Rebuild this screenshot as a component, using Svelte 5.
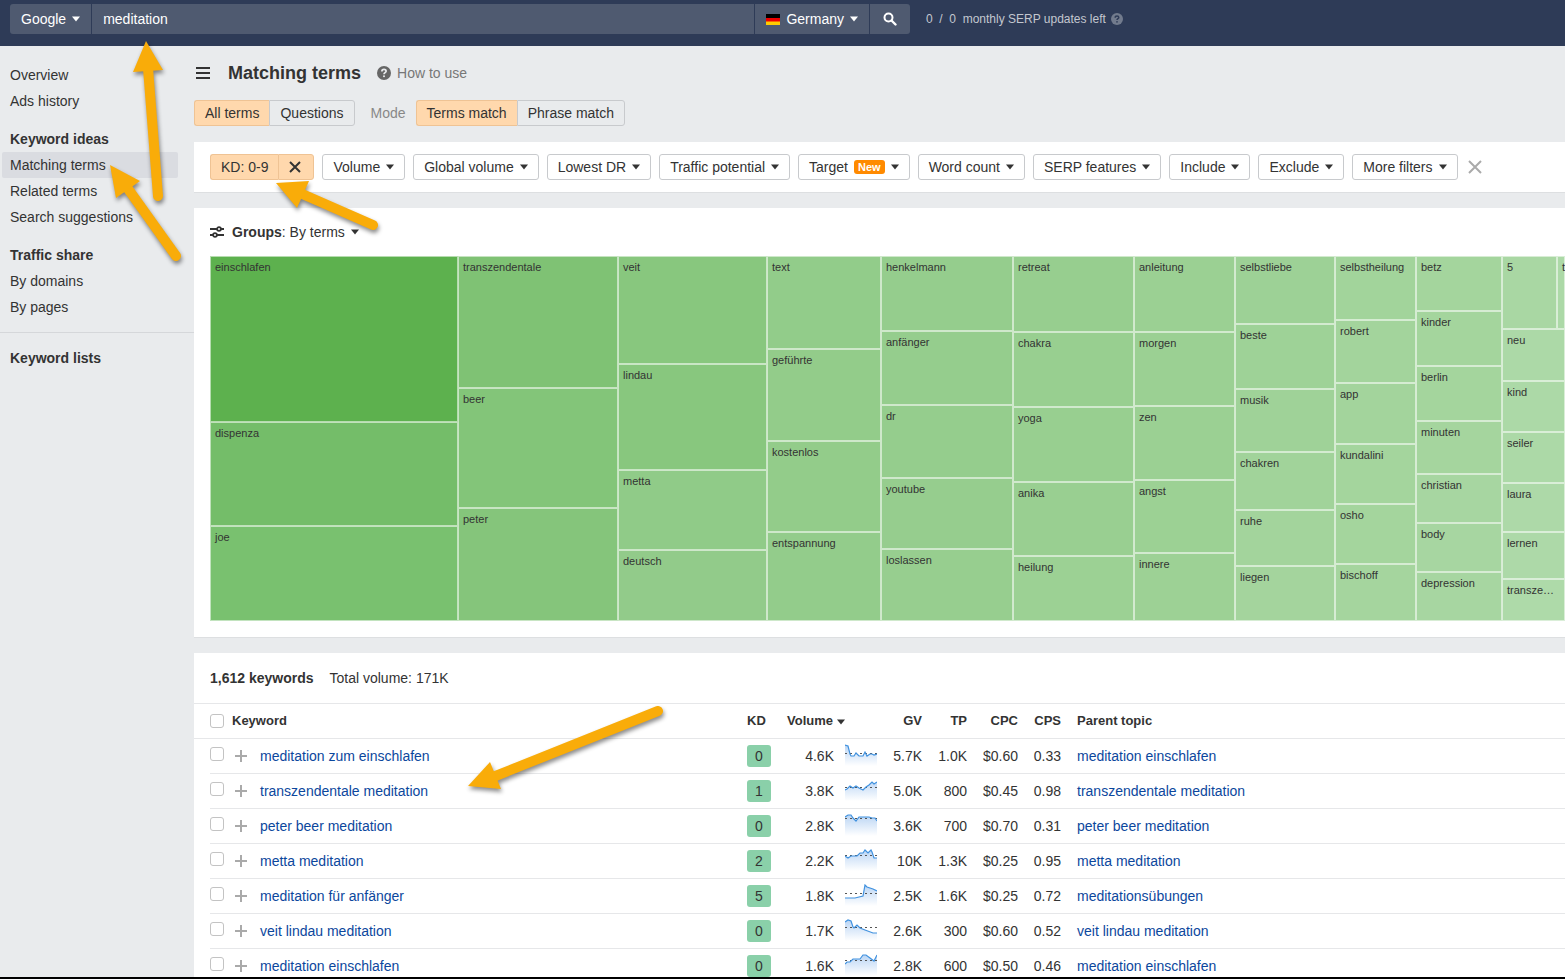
<script>
  let query = 'meditation'

  const nav = [
    { items: ['Overview', 'Ads history'] },
    {
      title: 'Keyword ideas',
      items: ['Matching terms', 'Related terms', 'Search suggestions']
    },
    { title: 'Traffic share', items: ['By domains', 'By pages'] }
  ]
  const current = 'Matching terms'

  const filters = [
    'Volume',
    'Global volume',
    'Lowest DR',
    'Traffic potential',
    'Target',
    'Word count',
    'SERP features',
    'Include',
    'Exclude',
    'More filters'
  ]

  // treemap columns: share of the width, then [term, share of the height, colour]
  const columns = [
    {
      size: 248,
      cells: [
        ['einschlafen', 166, '#5db14e'],
        ['dispenza', 104, '#74bd69'],
        ['joe', 95, '#79c16f']
      ]
    },
    {
      size: 160,
      cells: [
        ['transzendentale', 132, '#7fc274'],
        ['beer', 120, '#83c579'],
        ['peter', 113, '#85c57b']
      ]
    },
    {
      size: 149,
      cells: [
        ['veit', 108, '#88c77e'],
        ['lindau', 106, '#88c77e'],
        ['metta', 80, '#90cb88'],
        ['deutsch', 71, '#92cb8a']
      ]
    },
    {
      size: 114,
      cells: [
        ['text', 93, '#92cc8a'],
        ['geführte', 92, '#93cc8a'],
        ['kostenlos', 91, '#93cc8a'],
        ['entspannung', 89, '#93cc8b']
      ]
    },
    {
      size: 132,
      cells: [
        ['henkelmann', 75, '#95cd8d'],
        ['anfänger', 74, '#95cd8d'],
        ['dr', 73, '#95cd8d'],
        ['youtube', 71, '#96cd8e'],
        ['loslassen', 72, '#97ce8f']
      ]
    },
    {
      size: 121,
      cells: [
        ['retreat', 76, '#97ce8f'],
        ['chakra', 75, '#98cf90'],
        ['yoga', 75, '#98cf90'],
        ['anika', 74, '#99cf91'],
        ['heilung', 65, '#9cd194']
      ]
    },
    {
      size: 101,
      cells: [
        ['anleitung', 76, '#9bd093'],
        ['morgen', 74, '#9bd093'],
        ['zen', 74, '#9bd093'],
        ['angst', 73, '#9cd194'],
        ['innere', 68, '#9dd195']
      ]
    },
    {
      size: 100,
      cells: [
        ['selbstliebe', 68, '#9dd196'],
        ['beste', 65, '#9ed297'],
        ['musik', 63, '#9fd298'],
        ['chakren', 58, '#a1d39a'],
        ['ruhe', 56, '#a3d49c'],
        ['liegen', 55, '#a4d49d']
      ]
    },
    {
      size: 81,
      cells: [
        ['selbstheilung', 64, '#a2d49b'],
        ['robert', 63, '#a3d49c'],
        ['app', 61, '#a3d49c'],
        ['kundalini', 60, '#a4d59d'],
        ['osho', 60, '#a4d59d'],
        ['bischoff', 57, '#a5d59e']
      ]
    },
    {
      size: 86,
      cells: [
        ['betz', 55, '#a4d59d'],
        ['kinder', 55, '#a4d59d'],
        ['berlin', 55, '#a4d59d'],
        ['minuten', 53, '#a5d59e'],
        ['christian', 49, '#a7d6a1'],
        ['body', 49, '#a7d6a1'],
        ['depression', 49, '#a7d6a1']
      ]
    }
  ]
  const lastColumn = [
    ['neu', 52, '#acd9a7'],
    ['kind', 51, '#acd9a7'],
    ['seiler', 51, '#acd9a7'],
    ['laura', 49, '#add9a8'],
    ['lernen', 47, '#add9a8'],
    ['transze…', 42, '#aedaa9']
  ]

  const rows = [
    {
      keyword: 'meditation zum einschlafen',
      kd: 0, volume: '4.6K', gv: '5.7K', tp: '1.0K', cpc: '$0.60', cps: '0.33',
      parent: 'meditation einschlafen',
      trend: '0,1 3,2 5,10 6,12 9,12 11,9 14,12 18,12 20,8 22,12 25,10 27,10 29,11 32,10',
      average: 9
    },
    {
      keyword: 'transzendentale meditation',
      kd: 1, volume: '3.8K', gv: '5.0K', tp: '800', cpc: '$0.45', cps: '0.98',
      parent: 'transzendentale meditation',
      trend: '0,11 2,10 5,7 8,9 11,7 14,9 18,11 21,8 24,6 27,3 29,5 32,3',
      average: 8
    },
    {
      keyword: 'peter beer meditation',
      kd: 0, volume: '2.8K', gv: '3.6K', tp: '700', cpc: '$0.70', cps: '0.31',
      parent: 'peter beer meditation',
      trend: '0,3 3,1 6,1 8,4 11,7 14,3 17,3 24,3 27,4 30,4 32,7',
      average: 4
    },
    {
      keyword: 'metta meditation',
      kd: 2, volume: '2.2K', gv: '10K', tp: '1.3K', cpc: '$0.25', cps: '0.95',
      parent: 'metta meditation',
      trend: '0,7 3,9 6,7 12,7 15,4 18,4 20,1 23,4 26,1 27,3 29,9 32,9',
      average: 6
    },
    {
      keyword: 'meditation für anfänger',
      kd: 5, volume: '1.8K', gv: '2.5K', tp: '1.6K', cpc: '$0.25', cps: '0.72',
      parent: 'meditationsübungen',
      trend: '0,14 10,14 14,13 18,12 20,1 22,3 28,5 32,7',
      average: 9
    },
    {
      keyword: 'veit lindau meditation',
      kd: 0, volume: '1.7K', gv: '2.6K', tp: '300', cpc: '$0.60', cps: '0.52',
      parent: 'veit lindau meditation',
      trend: '0,3 3,1 6,2 8,8 9,9 12,6 15,9 20,11 28,14 32,14',
      average: 8
    },
    {
      keyword: 'meditation einschlafen',
      kd: 0, volume: '1.6K', gv: '2.8K', tp: '600', cpc: '$0.50', cps: '0.46',
      parent: 'meditation einschlafen',
      trend: '0,10 2,8 5,8 8,5 15,5 18,1 21,1 25,4 29,7 32,1',
      average: 6
    }
  ]
</script>

{#snippet caret()}
  <svg class="caret" width="8" height="6" viewBox="0 0 8 6" aria-hidden="true">
    <path d="M0 .5h8L4 5.5z" />
  </svg>
{/snippet}

{#snippet help(size)}
  <svg class="help" width={size} height={size} viewBox="0 0 14 14" aria-hidden="true">
    <circle cx="7" cy="7" r="7" fill="currentColor" />
    <path class="mark" d="M4.9 5.4C4.9 4.1 5.8 3.4 7 3.4s2.1.7 2.1 1.8c0 1.4-2.1 1.5-2.1 3" />
    <circle class="dot" cx="7" cy="10.3" r="1" />
  </svg>
{/snippet}

{#snippet cell([term, size, color])}
  <div class="cell" style="flex-grow: {size}; background-color: {color}">
    <span>{term}</span>
  </div>
{/snippet}

<div class="app">
  <header class="topbar">
    <form class="search">
      <button type="button" class="engine">Google {@render caret()}</button>
      <input type="text" aria-label="Keyword" bind:value={query} />
      <button type="button" class="country">
        <svg width="14" height="11" viewBox="0 0 14 11" aria-hidden="true">
          <path fill="#000" d="M0 0h14v4H0z" />
          <path fill="#e00" d="M0 4h14v4H0z" />
          <path fill="#fc0" d="M0 7.5h14V11H0z" />
        </svg>
        Germany {@render caret()}
      </button>
      <button type="button" class="submit" aria-label="Search">
        <svg width="14" height="14" viewBox="0 0 14 14" aria-hidden="true">
          <circle cx="5.5" cy="5.5" r="4" fill="none" stroke="#fff" stroke-width="2" />
          <path d="M8.5 8.5l4 4" stroke="#fff" stroke-width="2.4" stroke-linecap="round" />
        </svg>
      </button>
    </form>
    <div class="updates">
      <span>0 &nbsp;/&nbsp; 0 &nbsp;monthly SERP updates left</span>
      {@render help(12)}
    </div>
  </header>

  <div class="body">
    <nav class="sidebar">
      {#each nav as group}
        <section>
          {#if group.title}<h2>{group.title}</h2>{/if}
          {#each group.items as item}
            <a href="#top" class:active={item === current}>{item}</a>
          {/each}
        </section>
      {/each}
      <section class="lists">
        <h2>Keyword lists</h2>
      </section>
    </nav>

    <main>
      <div class="title">
        <button class="burger" aria-label="Menu">
          <svg width="14" height="12" viewBox="0 0 14 12" aria-hidden="true">
            <path d="M0 0h14v2H0zM0 5h14v2H0zM0 10h14v2H0z" fill="#333" />
          </svg>
        </button>
        <h1>Matching terms</h1>
        <a href="#how">{@render help(14)} How to use</a>
      </div>

      <div class="modes">
        <div class="switch">
          <button class="on">All terms</button>
          <button>Questions</button>
        </div>
        <div class="mode">
          <span>Mode</span>
          <div class="switch">
            <button class="on">Terms match</button>
            <button>Phrase match</button>
          </div>
        </div>
      </div>

      <div class="card filters">
        <div class="switch">
          <button class="on">KD: 0-9</button>
          <button class="on clear" aria-label="Remove KD filter">
            <svg width="12" height="12" viewBox="0 0 12 12" aria-hidden="true">
              <path d="M1 1l10 10M11 1L1 11" stroke="#333" stroke-width="2" />
            </svg>
          </button>
        </div>
        {#each filters as filter}
          <button class="filter">
            {filter}
            {#if filter === 'Target'}<em>New</em>{/if}
            {@render caret()}
          </button>
        {/each}
        <button class="reset" aria-label="Reset filters">
          <svg width="14" height="14" viewBox="0 0 14 14" aria-hidden="true">
            <path d="M1 1l12 12M13 1L1 13" stroke="#aaa" stroke-width="2" />
          </svg>
        </button>
      </div>

      <div class="card groups">
        <button class="group-by">
          <svg width="14" height="12" viewBox="0 0 14 12" aria-hidden="true">
            <g fill="none" stroke="#333" stroke-width="1.8">
              <path d="M0 3h7M11 3h3M0 9h3M7 9h7" />
              <circle cx="9" cy="3" r="1.9" />
              <circle cx="5" cy="9" r="1.9" />
            </g>
          </svg>
          <span><b>Groups</b>: By terms</span>
          {@render caret()}
        </button>

        <div class="treemap">
          {#each columns as column}
            <div class="column" style="flex-grow: {column.size}">
              {#each column.cells as item}{@render cell(item)}{/each}
            </div>
          {/each}
          <div class="column" style="flex-grow: 63">
            <div class="pair" style="flex-grow: 73">
              {@render cell(['5', 55, '#a9d7a3'])}
              {@render cell(['t', 8, '#acd9a7'])}
            </div>
            {#each lastColumn as item}{@render cell(item)}{/each}
          </div>
        </div>
      </div>

      <div class="card keywords">
        <div class="summary">
          <b>1,612 keywords</b>
          <span>Total volume: 171K</span>
        </div>
        <table>
          <colgroup>
            <col class="c-gutter" />
            <col class="c-check" />
            <col class="c-plus" />
            <col class="c-keyword" />
            <col class="c-kd" />
            <col class="c-volume" />
            <col class="c-trend" />
            <col class="c-number" />
            <col class="c-number" />
            <col class="c-cpc" />
            <col class="c-cps" />
            <col />
          </colgroup>
          <thead>
            <tr>
              <td></td>
              <th><input type="checkbox" aria-label="Select all" /></th>
              <th colspan="2">Keyword</th>
              <th>KD</th>
              <th colspan="2">Volume {@render caret()}</th>
              <th class="num">GV</th>
              <th class="num">TP</th>
              <th class="num">CPC</th>
              <th class="num">CPS</th>
              <th class="parent">Parent topic</th>
            </tr>
          </thead>
          <tbody>
            {#each rows as row}
              <tr>
                <td></td>
                <td class="check">
                  <input type="checkbox" aria-label={row.keyword} />
                </td>
                <td>
                  <button class="plus" aria-label="Add to list">
                    <svg width="12" height="12" viewBox="0 0 12 12" aria-hidden="true">
                      <path d="M5 0h2v5h5v2H7v5H5V7H0V5h5z" fill="#aaa" />
                    </svg>
                  </button>
                </td>
                <td><a href="#keyword">{row.keyword}</a></td>
                <td><span class="kd">{row.kd}</span></td>
                <td class="num volume">{row.volume}</td>
                <td>
                  <svg class="trend" width="32" height="24" viewBox="0 0 32 24" aria-hidden="true">
                    <defs>
                      <linearGradient id="fade" x1="0" y1="0" x2="0" y2="22" gradientUnits="userSpaceOnUse">
                        <stop offset="0" stop-color="#4a90e2" stop-opacity=".4" />
                        <stop offset="1" stop-color="#4a90e2" stop-opacity="0" />
                      </linearGradient>
                    </defs>
                    <polygon points="{row.trend} 32,22 0,22" fill="url(#fade)" />
                    <path d="M0 {row.average}.5h32" stroke="#555" stroke-dasharray="2 3" />
                    <polyline points={row.trend} fill="none" stroke="#4192df" stroke-width="1.2" />
                  </svg>
                </td>
                <td class="num">{row.gv}</td>
                <td class="num">{row.tp}</td>
                <td class="num">{row.cpc}</td>
                <td class="num">{row.cps}</td>
                <td class="parent"><a href="#parent">{row.parent}</a></td>
              </tr>
            {/each}
          </tbody>
        </table>
      </div>
    </main>
  </div>

  <!-- pointers laid over the page -->
  <svg class="arrows" width="700" height="820" viewBox="0 0 700 820" aria-hidden="true">
    <g>
      <path d="M148 68L158 196" />
      <polygon points="146,41 133,72 163,70" />
    </g>
    <g>
      <path d="M126 186L176 256" />
      <polygon points="110,165 140,181 116,198" />
    </g>
    <g>
      <path d="M300 193L373 225" />
      <polygon points="276,183 309,181 297,208" />
    </g>
    <g>
      <path d="M493 777L658 711" />
      <polygon points="468,786 490,762 501,789" />
    </g>
  </svg>
</div>

<style>
  :global(body) {
    background: #e9ebed;
  }

  .app {
    position: relative;
    box-sizing: border-box;
    height: 100vh;
    overflow: hidden;
    border-bottom: 2px solid #000;
    display: flex;
    flex-direction: column;
    color: #333;
    font: 14px/26px Arial, 'Liberation Sans', sans-serif;
  }

  button,
  input {
    font: inherit;
    color: inherit;
    margin: 0;
    padding: 0;
    border: 0;
    background: none;
    border-radius: 0;
  }

  button {
    cursor: pointer;
    white-space: nowrap;
  }

  a {
    color: inherit;
    text-decoration: none;
  }

  h1,
  h2 {
    margin: 0;
    font-size: inherit;
  }

  svg {
    display: block;
    flex: none;
  }

  .caret {
    fill: currentColor;
  }

  .topbar {
    flex: none;
    box-sizing: border-box;
    height: 46px;
    padding: 4px 10px 0;
    background: #2e3b57;
    color: #fff;
    display: flex;
    align-items: flex-start;
    gap: 16px;
  }

  .search {
    flex: 0 1 900px;
    height: 30px;
    display: flex;
    gap: 1px;
    border-radius: 3px;
    overflow: hidden;
  }

  .search button,
  .search input {
    background: #4f5a70;
  }

  .search button {
    display: flex;
    align-items: center;
    justify-content: center;
    gap: 6px;
    padding: 0 11px;
  }

  .search input {
    flex: 1;
    min-width: 0;
    padding: 0 11px;
  }

  .search .submit {
    width: 40px;
  }

  .updates {
    display: flex;
    align-items: center;
    gap: 5px;
    height: 30px;
    font-size: 12px;
    color: #c3c7cf;
    white-space: nowrap;
  }

  .updates .help {
    color: #727b8d;
  }

  .help .mark {
    fill: none;
    stroke: #e9ebed;
    stroke-width: 1.7;
  }

  .help .dot {
    fill: #e9ebed;
  }

  .updates .help .mark {
    stroke: #2e3b57;
  }

  .updates .help .dot {
    fill: #2e3b57;
  }

  .body {
    flex: 1;
    min-height: 0;
    display: flex;
  }

  .sidebar {
    flex: none;
    width: 194px;
    padding-top: 16px;
  }

  .sidebar section {
    margin-bottom: 12px;
    padding: 0 16px 0 2px;
  }

  .sidebar a,
  .sidebar h2 {
    display: block;
    padding-left: 8px;
  }

  .sidebar .active {
    background: #dadce1;
    border-radius: 2px;
  }

  .sidebar .lists {
    border-top: 1px solid #d5d7da;
    padding-top: 12px;
  }

  main {
    flex: 1;
    min-width: 0;
  }

  .title {
    display: flex;
    align-items: center;
    height: 54px;
  }

  .burger {
    padding: 0 2px;
    margin-right: 16px;
  }

  h1 {
    font-size: 18px;
    margin-right: 16px;
  }

  .title a {
    display: flex;
    align-items: center;
    gap: 6px;
    color: #777;
  }

  .title .help {
    color: #666;
  }

  .modes {
    display: flex;
    gap: 16px;
    margin-bottom: 16px;
  }

  .mode {
    display: flex;
    gap: 10px;
    color: #888;
  }

  .switch {
    display: flex;
    color: #333;
  }

  .switch button,
  .filter {
    box-sizing: border-box;
    height: 26px;
    line-height: 24px;
    border: 1px solid #c8cacd;
    padding: 0 10px;
  }

  .switch button:first-child {
    border-right: 0;
    border-radius: 3px 0 0 3px;
  }

  .switch button:last-child {
    border-radius: 0 3px 3px 0;
  }

  .switch .on {
    background: #ffd8ad;
    border-color: #efc394;
  }

  .card {
    background: #fff;
    margin-bottom: 15px;
    border-bottom: 1px solid #dddfe1;
  }

  .filters {
    display: flex;
    align-items: center;
    gap: 8px;
    padding: 12px 0 12px 16px;
  }

  .filter {
    display: flex;
    align-items: center;
    gap: 6px;
    border-radius: 3px;
    background: #fff;
  }

  .filter em {
    background: #ff8a00;
    color: #fff;
    font: bold 11px/14px Arial, 'Liberation Sans', sans-serif;
    padding: 0 4px;
    border-radius: 3px;
  }

  .clear {
    width: 36px;
  }

  .reset {
    padding: 0 2px;
  }

  .groups {
    padding: 0 0 16px 16px;
  }

  .group-by {
    height: 48px;
    display: flex;
    align-items: center;
    gap: 8px;
  }

  .group-by .caret {
    margin-left: -2px;
  }

  .treemap {
    display: flex;
    height: 365px;
    font-size: 11px;
    line-height: 12px;
  }

  .column {
    flex: 1 1 0;
    min-width: 0;
    display: flex;
    flex-direction: column;
  }

  .pair {
    flex: 1 1 0;
    min-height: 0;
    display: flex;
  }

  .cell {
    flex: 1 1 0;
    min-width: 0;
    min-height: 0;
    box-shadow: inset 0 0 0 1px rgba(255, 255, 255, 0.55);
    overflow: hidden;
    white-space: nowrap;
  }

  .cell span {
    display: block;
    padding: 5px 0 0 5px;
  }

  .summary {
    height: 50px;
    padding-left: 16px;
    display: flex;
    align-items: center;
    gap: 16px;
  }

  table {
    width: 100%;
    table-layout: fixed;
    border-collapse: separate;
    border-spacing: 0;
  }

  .c-gutter {
    width: 16px;
  }

  .c-check {
    width: 22px;
  }

  .c-plus {
    width: 28px;
  }

  .c-keyword {
    width: 487px;
  }

  .c-kd {
    width: 40px;
  }

  .c-volume {
    width: 58px;
  }

  .c-trend {
    width: 32px;
  }

  .c-number {
    width: 45px;
  }

  .c-cpc {
    width: 51px;
  }

  .c-cps {
    width: 43px;
  }

  th,
  td {
    box-sizing: border-box;
    height: 35px;
    padding: 0;
    text-align: left;
    white-space: nowrap;
    line-height: 22px;
    border-bottom: 1px solid #e6e7e9;
  }

  thead th,
  thead td {
    height: 36px;
    border-top: 1px solid #e6e7e9;
    font-size: 13px;
  }

  tbody td:first-child {
    border-bottom-color: transparent;
  }

  th .caret {
    display: inline-block;
  }

  .num {
    text-align: right;
  }

  .volume {
    padding-right: 11px;
  }

  .parent {
    padding-left: 16px;
  }

  td a {
    color: #0c479d;
  }

  input[type='checkbox'] {
    appearance: none;
    display: block;
    box-sizing: border-box;
    width: 14px;
    height: 14px;
    border: 1px solid #c3c3c3;
    border-radius: 3px;
    background: #fff;
  }

  .check {
    padding-bottom: 4px;
  }

  .plus {
    display: block;
    padding: 0 3px;
  }

  .kd {
    display: block;
    width: 24px;
    background: #8ad0a9;
    border-radius: 3px;
    text-align: center;
  }

  .arrows {
    position: absolute;
    top: 0;
    left: 0;
    pointer-events: none;
  }

  .arrows g {
    fill: #f9ac09;
    filter: drop-shadow(1px 3px 2px rgba(0, 0, 0, 0.45));
  }

  .arrows path {
    stroke: #f9ac09;
    stroke-width: 10;
    stroke-linecap: round;
  }
</style>
